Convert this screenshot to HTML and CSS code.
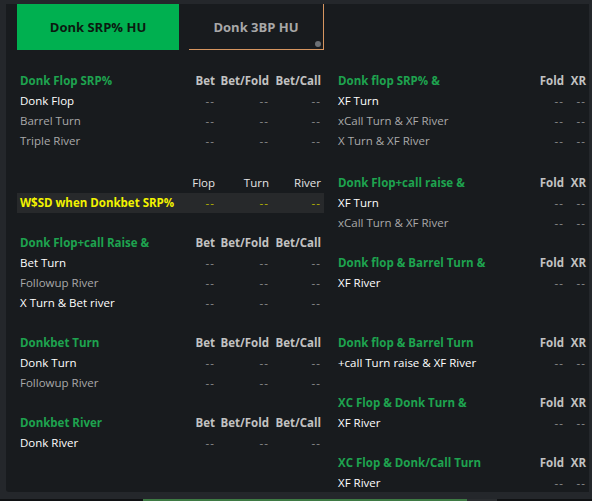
FILE: index.html
```html
<!DOCTYPE html>
<html>
<head>
<meta charset="utf-8">
<link rel="stylesheet" href="styles.css">
</head>
<body>
<div class="panel">
  <div class="tabs">
    <div class="tab tab-active">Donk SRP% HU</div>
    <div class="tab tab-idle">Donk 3BP HU<span class="dot"></span></div>
  </div>
  <div class="cols">
    <div class="col col-left">
      <div class="sec">
        <div class="row row-l"><span class="title">Donk Flop SRP%</span><span class="hd">Bet</span><span class="hd">Bet/Fold</span><span class="hd">Bet/Call</span></div>
        <div class="row row-l"><span class="lbl w">Donk Flop</span><span class="v">--</span><span class="v">--</span><span class="v">--</span></div>
        <div class="row row-l"><span class="lbl g">Barrel Turn</span><span class="v">--</span><span class="v">--</span><span class="v">--</span></div>
        <div class="row row-l"><span class="lbl g">Triple River</span><span class="v">--</span><span class="v">--</span><span class="v">--</span></div>
      </div>
      <div class="sec sec-22">
        <div class="row row-l"><span></span><span class="hd2">Flop</span><span class="hd2">Turn</span><span class="hd2">River</span></div>
        <div class="row row-l hl"><span class="lbl y">W$SD when Donkbet SRP%</span><span class="v vy">--</span><span class="v vy">--</span><span class="v vy">--</span></div>
      </div>
      <div class="sec sec-20">
        <div class="row row-l"><span class="title">Donk Flop+call Raise &amp;</span><span class="hd">Bet</span><span class="hd">Bet/Fold</span><span class="hd">Bet/Call</span></div>
        <div class="row row-l"><span class="lbl w">Bet Turn</span><span class="v">--</span><span class="v">--</span><span class="v">--</span></div>
        <div class="row row-l"><span class="lbl g">Followup River</span><span class="v">--</span><span class="v">--</span><span class="v">--</span></div>
        <div class="row row-l"><span class="lbl w">X Turn &amp; Bet river</span><span class="v">--</span><span class="v">--</span><span class="v">--</span></div>
      </div>
      <div class="sec sec-20">
        <div class="row row-l"><span class="title">Donkbet Turn</span><span class="hd">Bet</span><span class="hd">Bet/Fold</span><span class="hd">Bet/Call</span></div>
        <div class="row row-l"><span class="lbl w">Donk Turn</span><span class="v">--</span><span class="v">--</span><span class="v">--</span></div>
        <div class="row row-l"><span class="lbl g">Followup River</span><span class="v">--</span><span class="v">--</span><span class="v">--</span></div>
      </div>
      <div class="sec sec-20">
        <div class="row row-l"><span class="title">Donkbet River</span><span class="hd">Bet</span><span class="hd">Bet/Fold</span><span class="hd">Bet/Call</span></div>
        <div class="row row-l"><span class="lbl w">Donk River</span><span class="v">--</span><span class="v">--</span><span class="v">--</span></div>
      </div>
    </div>
    <div class="col col-right">
      <div class="sec">
        <div class="row row-r"><span class="title">Donk flop SRP% &amp;</span><span class="hd">Fold</span><span class="hd">XR</span></div>
        <div class="row row-r"><span class="lbl w">XF Turn</span><span class="v">--</span><span class="v">--</span></div>
        <div class="row row-r"><span class="lbl g">xCall Turn &amp; XF River</span><span class="v">--</span><span class="v">--</span></div>
        <div class="row row-r"><span class="lbl g">X Turn &amp; XF River</span><span class="v">--</span><span class="v">--</span></div>
      </div>
      <div class="sec sec-22">
        <div class="row row-r"><span class="title">Donk Flop+call raise &amp;</span><span class="hd">Fold</span><span class="hd">XR</span></div>
        <div class="row row-r"><span class="lbl w">XF Turn</span><span class="v">--</span><span class="v">--</span></div>
        <div class="row row-r"><span class="lbl g">xCall Turn &amp; XF River</span><span class="v">--</span><span class="v">--</span></div>
      </div>
      <div class="sec sec-20">
        <div class="row row-r"><span class="title">Donk flop &amp; Barrel Turn &amp;</span><span class="hd">Fold</span><span class="hd">XR</span></div>
        <div class="row row-r"><span class="lbl w">XF River</span><span class="v">--</span><span class="v">--</span></div>
      </div>
      <div class="sec sec-40">
        <div class="row row-r"><span class="title">Donk flop &amp; Barrel Turn</span><span class="hd">Fold</span><span class="hd">XR</span></div>
        <div class="row row-r"><span class="lbl w">+call Turn raise &amp; XF River</span><span class="v">--</span><span class="v">--</span></div>
      </div>
      <div class="sec sec-20">
        <div class="row row-r"><span class="title">XC Flop &amp; Donk Turn &amp;</span><span class="hd">Fold</span><span class="hd">XR</span></div>
        <div class="row row-r"><span class="lbl w">XF River</span><span class="v">--</span><span class="v">--</span></div>
      </div>
      <div class="sec sec-20">
        <div class="row row-r"><span class="title">XC Flop &amp; Donk/Call Turn</span><span class="hd">Fold</span><span class="hd">XR</span></div>
        <div class="row row-r"><span class="lbl w">XF River</span><span class="v">--</span><span class="v">--</span></div>
      </div>
    </div>
  </div>
</div>
<div class="statusbar">
  <div class="sb-a"></div>
  <div class="sb-green"></div>
  <div class="sb-b"></div>
</div>
</body>
</html>
```
FILE: styles.css
```css
* { box-sizing: border-box; }
html, body { margin: 0; padding: 0; }
body {
  width: 592px;
  height: 501px;
  background: #24272b;
  font-family: "Open Sans", "Liberation Sans", sans-serif;
  font-size: 11.5px;
  display: flex;
  flex-direction: column;
  overflow: hidden;
}
.panel {
  height: 488px;
  margin: 4px 3px 0 6px;
  background: #181b1e;
  border-bottom-left-radius: 3px;
  padding: 0 0 0 11px;
  display: flex;
  flex-direction: column;
}
.tabs {
  display: flex;
  gap: 10px;
  height: 46px;
}
.tab {
  display: flex;
  align-items: center;
  justify-content: center;
  font-weight: 700;
  font-size: 13px;
  position: relative;
}
.tab-active {
  width: 162px;
  background: #00b050;
  color: #0b1a10;
}
.tab-idle {
  width: 135px;
  color: #a8a8a8;
  border-right: 1px solid #d69560;
  border-bottom: 1px solid #d69560;
  height: 46px;
}
.dot {
  position: absolute;
  right: 2px;
  bottom: 2px;
  width: 6px;
  height: 6px;
  border-radius: 50%;
  background: #6c7075;
}
.cols {
  display: flex;
  gap: 11px;
  margin-top: 21px;
}
.col-left { width: 307px; }
.col-right { width: 254px; }
.sec-20 { margin-top: 20px; }
.sec-22 { margin-top: 22px; }
.sec-40 { margin-top: 40px; }
.row {
  display: grid;
  height: 20px;
  line-height: 20px;
  padding: 0 3px;
  white-space: nowrap;
}
.row-l { grid-template-columns: minmax(0, 1fr) 52px 54px 52px; }
.row-r { grid-template-columns: minmax(0, 1fr) 52px 22px; }
.row span:not(:first-child) { text-align: right; }
.title { color: #1ea34f; font-weight: 700; }
.hd { color: #c2c2c2; font-weight: 700; }
.hd2 { color: #e4e4e4; }
.lbl.w { color: #ffffff; }
.lbl.g { color: #a9a9a9; }
.lbl.y { color: #f2f200; font-weight: 700; }
.v { color: #8e8e8e; letter-spacing: 1px; }
.v.vy { color: #b8b800; }
.hl { background: #27292b; }
.statusbar {
  margin-top: 7px;
  height: 2px;
  display: flex;
  background: #101214;
}
.sb-a { width: 143px; }
.sb-green { width: 324px; background: #3e7a44; }
.sb-b { width: 30px; background: #2a2d30; }
```
